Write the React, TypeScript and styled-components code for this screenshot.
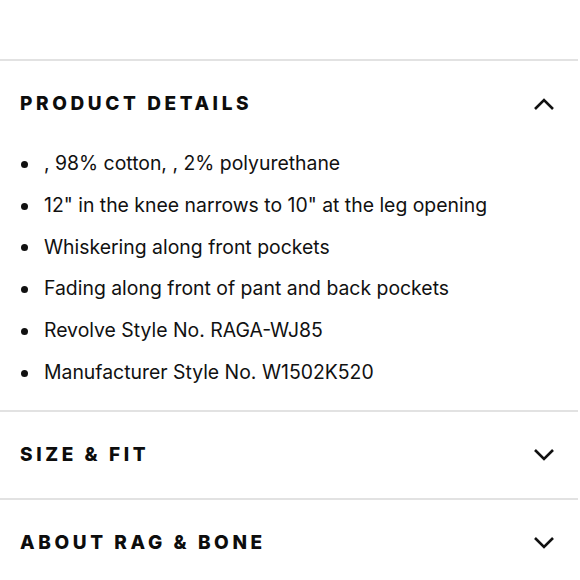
import React from 'react';
import styled, { createGlobalStyle } from 'styled-components';

const GlobalStyle = createGlobalStyle`
  html, body {
    margin: 0;
    padding: 0;
    background: #ffffff;
  }
  body {
    font-family: Inter, "Liberation Sans", sans-serif;
    color: #111111;
  }
`;

type Section = {
  title: string;
  open: boolean;
  items?: string[];
};

const sections: Section[] = [
  {
    title: 'Product Details',
    open: true,
    items: [
      ', 98% cotton, , 2% polyurethane',
      '12" in the knee narrows to 10" at the leg opening',
      'Whiskering along front pockets',
      'Fading along front of pant and back pockets',
      'Revolve Style No. RAGA-WJ85',
      'Manufacturer Style No. W1502K520',
    ],
  },
  { title: 'Size & Fit', open: false },
  { title: 'About Rag & Bone', open: false },
];

const Chevron: React.FC<{ up: boolean }> = ({ up }) => (
  <svg width="22" height="14" viewBox="0 0 22 14" fill="none">
    <path
      d={up ? 'M2 12 L11 3 L20 12' : 'M2 2 L11 11 L20 2'}
      stroke="#111"
      strokeWidth="2.6"
      strokeLinecap="butt"
      strokeLinejoin="miter"
    />
  </svg>
);

export default function App() {
  return (
    <>
      <GlobalStyle />
      <Page>
        {sections.map((s) => (
          <Accordion key={s.title}>
            <Header>
              <Title>{s.title}</Title>
              <Chevron up={s.open} />
            </Header>
            {s.open && s.items && (
              <List>
                {s.items.map((item) => (
                  <Item key={item}>{item}</Item>
                ))}
              </List>
            )}
          </Accordion>
        ))}
      </Page>
    </>
  );
}

const Page = styled.div`
  width: 578px;
  padding-top: 59px;
`;

const Accordion = styled.section`
  border-top: 2px solid #e2e2e2;
`;

const Header = styled.div`
  height: 86px;
  display: flex;
  align-items: center;
  justify-content: space-between;
  padding: 0 23px 0 20px;
`;

const Title = styled.h2`
  margin: 0 0 1px;
  font-family: Inter, "Liberation Sans", sans-serif;
  font-size: 19px;
  font-weight: 800;
  letter-spacing: 3.6px;
  text-transform: uppercase;
  color: #0d0d0d;
`;

const List = styled.ul`
  list-style: none;
  margin: -4px 0 0;
  padding: 0 0 16px 44px;
`;

const Item = styled.li`
  position: relative;
  font-size: 19.4px;
  line-height: 41.8px;
  color: #111;

  &::before {
    content: '';
    position: absolute;
    left: -23px;
    top: 50%;
    width: 7px;
    height: 7px;
    margin-top: -3px;
    border-radius: 50%;
    background: #111;
  }
`;
